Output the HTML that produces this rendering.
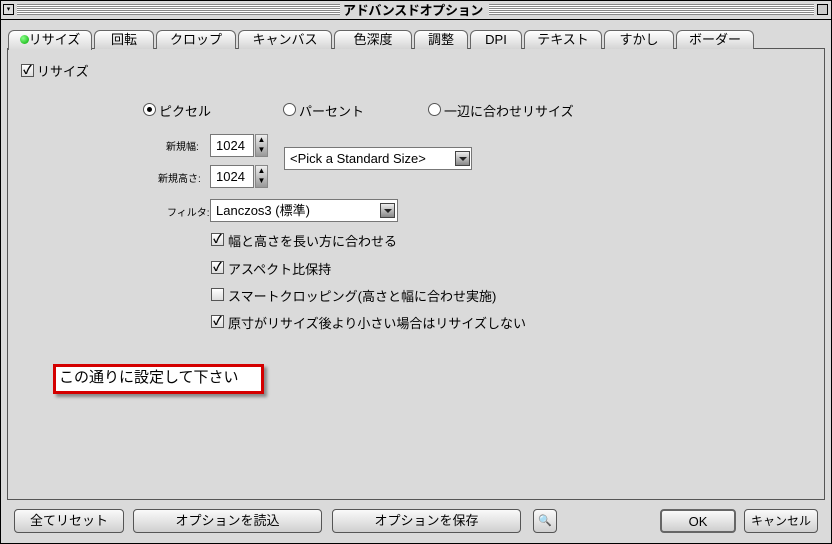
<!DOCTYPE html><html><head><meta charset="utf-8"><style>
*{box-sizing:border-box;margin:0;padding:0}
body{width:832px;height:544px;background:#dadada;font-family:"Liberation Sans","Noto Sans CJK JP",sans-serif;font-size:13px;color:#000;position:relative;overflow:hidden}
.a{position:absolute;white-space:nowrap}
.win{left:0;top:0;width:832px;height:544px;border:1px solid #000}
.title{left:1px;top:1px;width:830px;height:19px;background:#dadada;border-bottom:1px solid #000}
.stripes{top:4px;height:11px;background:repeating-linear-gradient(#888 0 1px,#fff 1px 2px)}
.tab{top:30px;height:19px;border:1px solid #666;border-bottom:none;border-radius:6px 6px 0 0;background:linear-gradient(#fff,#d4d4d4);text-align:center;font-size:13px;line-height:18px}
.panel{left:7px;top:48px;width:818px;height:452px;border:1px solid #555;background:#dadada}
.cb{width:13px;height:13px;border:1px solid #555;background:linear-gradient(#fff,#ddd);font-size:12px;line-height:11px;text-align:center;font-weight:bold}
.rad{width:13px;height:13px;border:1px solid #555;border-radius:50%;background:#fff}
.inp{background:#fff;border:1px solid #777;height:23px;line-height:21px;padding-left:5px;font-size:13px}
.dd{width:15px;height:15px;border:1px solid #444;background:linear-gradient(#eee,#888)}
.dd:after{content:"";position:absolute;left:3px;top:5px;border:4px solid transparent;border-top:4px solid #222}
.btn{top:509px;height:24px;border:1px solid #555;border-radius:4px;background:linear-gradient(#fafafa,#cfcfcf);text-align:center;line-height:22px;font-size:13px}
.lbl{font-size:10px}
</style></head><body>
<div class="a win"></div>
<div class="a title"></div>
<div class="a" style="left:3px;top:4px;width:11px;height:11px;border:1px solid #000;background:#ddd;font-size:7px;line-height:9px;text-align:center">▾</div>
<div class="a stripes" style="left:17px;width:323px"></div>
<div class="a" style="left:343px;top:1px;width:144px;font-weight:bold;font-size:13px;line-height:19px;letter-spacing:-0.3px">アドバンスドオプション</div>
<div class="a stripes" style="left:489px;width:325px"></div>
<div class="a" style="left:817px;top:4px;width:11px;height:11px;border:1px solid #000;background:#ccc"></div>
<div class="a panel"></div>
<div class="a tab" style="left:8px;width:84px;background:linear-gradient(#fff,#dadada);height:20px"><span style="display:inline-block;width:9px;height:9px;border-radius:50%;background:radial-gradient(circle at 35% 35%,#8f8,#0a0)"></span>リサイズ</div>
<div class="a tab" style="left:94px;width:60px">回転</div>
<div class="a tab" style="left:156px;width:80px">クロップ</div>
<div class="a tab" style="left:238px;width:94px">キャンバス</div>
<div class="a tab" style="left:334px;width:78px">色深度</div>
<div class="a tab" style="left:414px;width:54px">調整</div>
<div class="a tab" style="left:470px;width:52px">DPI</div>
<div class="a tab" style="left:524px;width:78px">テキスト</div>
<div class="a tab" style="left:604px;width:70px">すかし</div>
<div class="a tab" style="left:676px;width:78px">ボーダー</div>

<div class="a cb" style="left:21px;top:64px">✓</div><div class="a" style="left:37px;top:61px">リサイズ</div>

<div class="a rad" style="left:143px;top:103px"><div class="a" style="left:3px;top:3px;width:5px;height:5px;border-radius:50%;background:#000"></div></div><div class="a" style="left:159px;top:101px">ピクセル</div>
<div class="a rad" style="left:283px;top:103px"></div><div class="a" style="left:299px;top:101px">パーセント</div>
<div class="a rad" style="left:428px;top:103px"></div><div class="a" style="left:444px;top:101px">一辺に合わせリサイズ</div>

<div class="a lbl" style="left:166px;top:138px">新規幅:</div>
<div class="a inp" style="left:210px;top:134px;width:44px">1024</div>
<div class="a" style="left:255px;top:134px;width:13px;height:23px;border:1px solid #888;background:linear-gradient(#eee,#999);font-size:8px;line-height:10px;text-align:center;white-space:normal">▲<br>▼</div>
<div class="a lbl" style="left:158px;top:170px">新規高さ:</div>
<div class="a inp" style="left:210px;top:165px;width:44px">1024</div>
<div class="a" style="left:255px;top:165px;width:13px;height:23px;border:1px solid #888;background:linear-gradient(#eee,#999);font-size:8px;line-height:10px;text-align:center;white-space:normal">▲<br>▼</div>
<div class="a inp" style="left:284px;top:147px;width:188px">&lt;Pick a Standard Size&gt;</div>
<div class="a dd" style="left:455px;top:151px"></div>

<div class="a lbl" style="left:167px;top:204px">フィルタ:</div>
<div class="a inp" style="left:210px;top:199px;width:188px">Lanczos3 (標準)</div>
<div class="a dd" style="left:380px;top:203px"></div>

<div class="a cb" style="left:211px;top:233px">✓</div><div class="a" style="left:228px;top:231px">幅と高さを長い方に合わせる</div>
<div class="a cb" style="left:211px;top:261px">✓</div><div class="a" style="left:228px;top:259px">アスペクト比保持</div>
<div class="a cb" style="left:211px;top:288px"></div><div class="a" style="left:228px;top:286px">スマートクロッピング(高さと幅に合わせ実施)</div>
<div class="a cb" style="left:211px;top:315px">✓</div><div class="a" style="left:228px;top:313px">原寸がリサイズ後より小さい場合はリサイズしない</div>

<div class="a" style="left:53px;top:364px;width:211px;height:30px;border:3px solid #d40000;background:#fff;box-shadow:3px 3px 3px #888;font-size:15px;line-height:22px;padding-left:3px">この通りに設定して下さい</div>

<div class="a btn" style="left:14px;top:509px;width:110px">全てリセット</div>
<div class="a btn" style="left:133px;width:189px">オプションを読込</div>
<div class="a btn" style="left:332px;width:189px">オプションを保存</div>
<div class="a btn" style="left:533px;width:24px;font-size:11px;color:#00a">🔍</div>
<div class="a btn" style="left:660px;width:76px;border:2px solid #666">OK</div>
<div class="a btn" style="left:744px;width:74px;font-size:12px">キャンセル</div>
</body></html>
